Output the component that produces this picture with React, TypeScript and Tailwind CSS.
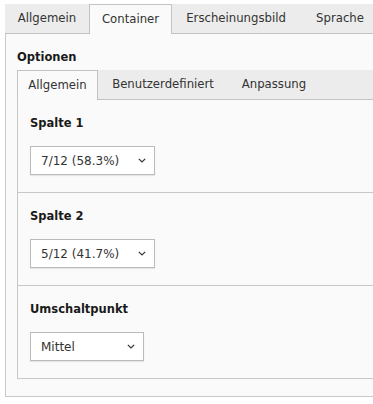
import { ReactNode } from "react"

const TOP_TABS = [
  { label: "Allgemein", w: "w-[84px]" },
  { label: "Container", w: "w-[83px]", active: true },
  { label: "Erscheinungsbild", w: "w-[128px]" },
  { label: "Sprache", w: "w-[80px]" },
]

const INNER_TABS = [
  { label: "Allgemein", w: "w-[81px]", active: true },
  { label: "Benutzerdefiniert", w: "w-[130px]" },
  { label: "Anpassung", w: "w-[92px]" },
]

function Chevron() {
  return (
    <svg width="8" height="5" viewBox="0 0 8 5" className="flex-none">
      <polyline points="0.8,0.8 4,4 7.2,0.8" fill="none" stroke="#333" strokeWidth="1.2" />
    </svg>
  )
}

function Select({ value, width }: { value: string; width: string }) {
  return (
    <div
      className={
        "flex items-center justify-between h-[29px] pl-[10px] pr-[8px] bg-white border border-[#bbbbbb] shadow-[0_1px_1px_rgba(0,0,0,0.08)] text-[12px] " +
        width
      }
    >
      <span>{value}</span>
      <Chevron />
    </div>
  )
}

function Section({ label, children, last }: { label: string; children: ReactNode; last?: boolean }) {
  return (
    <div className={"pt-[15px] pb-[17px] px-[12px] " + (last ? "" : "border-b border-[#c8c8c8]")}>
      <div className="font-bold text-[11.5px] leading-[16px] mb-[15px] text-[#1a1a1a]">{label}</div>
      {children}
    </div>
  )
}

export default function App() {
  return (
    <div className="w-[373px] h-[404px] overflow-hidden bg-white text-[11.7px] text-[#333] font-['DejaVu_Sans',sans-serif]">
      <div className="ml-[5px] w-[420px] pt-[4px]">
        {/* top tabs */}
        <div className="flex h-[30px] bg-[#ececec] border-b border-[#c3c3c3]">
          {TOP_TABS.map((t) => (
            <div
              key={t.label}
              className={
                "flex items-center justify-center flex-none " +
                t.w +
                (t.active ? " bg-[#fafafa] border border-b-0 border-[#c3c3c3] h-[30px]" : " h-[29px]")
              }
            >
              {t.label}
            </div>
          ))}
        </div>

        {/* outer panel */}
        <div className="bg-[#fafafa] border-l border-b border-[#c8c8c8] pl-[11px] pt-[15px] pb-[17px]">
          <div className="font-bold text-[11.5px] leading-[16px] mb-[5px] text-[#1a1a1a]">Optionen</div>

          {/* inner tabs */}
          <div className="flex h-[30px] bg-[#ececec] border-b border-[#c3c3c3]">
            {INNER_TABS.map((t) => (
              <div
                key={t.label}
                className={
                  "flex items-center justify-center flex-none " +
                  t.w +
                  (t.active ? " bg-[#fafafa] border border-b-0 border-[#c3c3c3] h-[30px]" : " h-[29px]")
                }
              >
                {t.label}
              </div>
            ))}
          </div>

          {/* inner panel */}
          <div className="border-l border-b border-[#c8c8c8] bg-[#fafafa]">
            <Section label="Spalte 1">
              <Select value="7/12 (58.3%)" width="w-[125px]" />
            </Section>
            <Section label="Spalte 2">
              <Select value="5/12 (41.7%)" width="w-[125px]" />
            </Section>
            <Section label="Umschaltpunkt" last>
              <Select value="Mittel" width="w-[114px]" />
            </Section>
          </div>
        </div>
      </div>
    </div>
  )
}
